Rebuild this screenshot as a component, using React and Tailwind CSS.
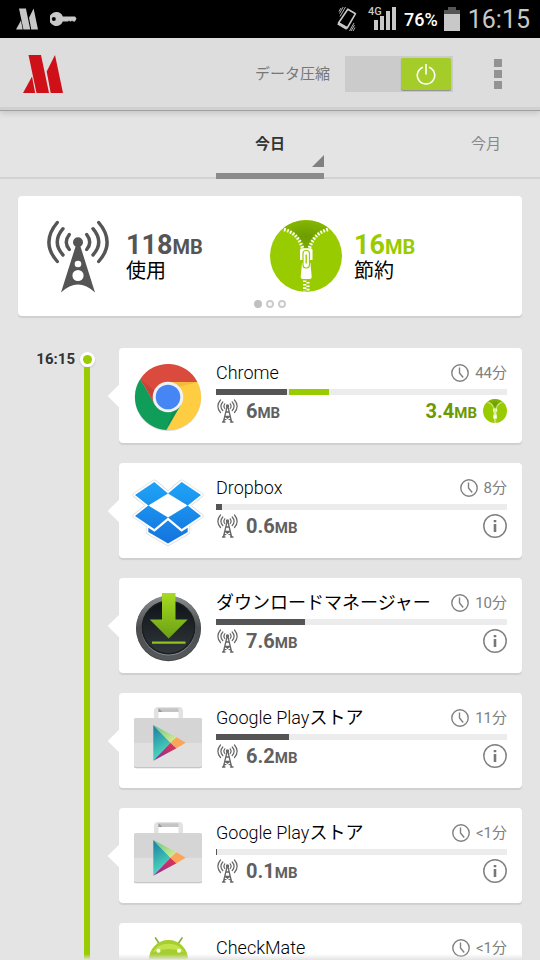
import { useState } from "react";

const apps = [
  { name: "Chrome", icon: ChromeIcon, time: "44分", used: "6", usedPct: 24.4, saved: "3.4", savedPct: 13.8 },
  { name: "Dropbox", icon: DropboxIcon, time: "8分", used: "0.6", usedPct: 2.1 },
  { nameJa: "ダウンロードマネージャー", icon: DownloadIcon, time: "10分", used: "7.6", usedPct: 30.6 },
  { name: "Google Play", nameJa: "ストア", icon: PlayIcon, time: "11分", used: "6.2", usedPct: 25.1 },
  { name: "Google Play", nameJa: "ストア", icon: PlayIcon, time: "<1分", used: "0.1", usedPct: 0.4 },
  { name: "CheckMate", icon: AndroidIcon, time: "<1分", usedPct: 0.4 },
];

function MaxLogo({ className }) {
  return (
    <svg viewBox="0 0 40 38" className={className} fill="currentColor" aria-hidden="true">
      <path d="M5.5 0H18l8 38H13.5zM0 38l9-16.500L12.200 38zM32 0l8 38H27.700l-4-21.500z" />
    </svg>
  );
}

function KeyIcon() {
  return (
    <svg viewBox="0 0 27 14" className="h-3.5 w-[27px]" aria-hidden="true">
      <path
        fill="#c8c8c8"
        fillRule="evenodd"
        d="M6.500 0a7 7 0 0 1 6.300 4.500H25l1.500 2-1.500 3h-2l-1-1-1 1h-1l-1-1-1 1h-5.200A7 7 0 1 1 6.500 0zM3.800 5a2 2 0 1 0 0 4 2 2 0 0 0 0-4z"
      />
    </svg>
  );
}

function VibrateIcon() {
  return (
    <svg viewBox="0 0 22 26" className="h-[26px] w-[22px]" fill="none" stroke="#c8c8c8" aria-hidden="true">
      <path d="M11.800 3.200l7.700 4.500-8.300 14.300-8.700-5z" strokeWidth="1.600" strokeLinejoin="round" />
      <path d="M2 17.300l9 5.200" strokeWidth="3" />
      <path d="M9.500 1L4 10.500M7.200 1L3.500 7.500M5 2L3 5.500M18 17L13.500 25M18.500 19l-3.500 6M19 21.500l-2 3.500" strokeWidth="0.900" />
    </svg>
  );
}

function BigTower() {
  return (
    <svg viewBox="0 0 62 73" className="h-[73px] w-[62px]" aria-hidden="true">
      <g fill="none" stroke="#555" strokeWidth="3.400" strokeLinecap="round">
        <path d="M10.300 2.500Q-6.500 22.300 10.300 41.500M16 8.700Q4.500 22.300 16 35M22.300 14.500Q16.300 22.300 22.300 29.500" />
        <path d="M51.700 2.500Q68.500 22.300 51.700 41.500M46 8.700Q57.500 22.300 46 35M39.700 14.500Q45.700 22.300 39.700 29.500" />
      </g>
      <circle cx="31" cy="22.300" r="5" fill="#555" />
      <path d="M29 25h4L48 72.500Q31 56.500 14 72.500z" fill="#555" />
      <circle cx="31" cy="44" r="3.300" fill="#fff" />
      <circle cx="31" cy="55.500" r="5.600" fill="#fff" />
    </svg>
  );
}

function SmallTower() {
  return (
    <svg viewBox="0 0 22 24" className="h-6 w-[22px] shrink-0" fill="none" stroke="#666" strokeLinecap="round" aria-hidden="true">
      <path
        strokeWidth="1.200"
        d="M4.500 1Q-.8 7.200 4.500 13.500M6.800 3Q3 7.200 6.800 11.500M8.800 4.800Q7 7.200 8.800 9.500M18.500 1Q23.800 7.200 18.500 13.500M16.200 3Q20 7.200 16.200 11.500M14.200 4.800Q16 7.200 14.200 9.500"
      />
      <circle cx="11.500" cy="7" r="1.700" fill="#666" stroke="none" />
      <path strokeWidth="1.300" d="M11 8L7.500 22.500M12 8l3.500 14.500M10 13h3M9 17.500h5M9 17.500l5.500 3.500M14 17.500L8.500 21M6.500 23h2.500M14.500 23H17" />
    </svg>
  );
}

function ZipperIcon({ className, id }) {
  return (
    <svg viewBox="0 0 72 72" className={className} aria-hidden="true">
      <defs>
        <radialGradient id={id} cx="0.5" cy="0.6" r="0.6">
          <stop offset="0" stopColor="#6c9c00" />
          <stop offset="1" stopColor="#84b600" />
        </radialGradient>
      </defs>
      <circle cx="36" cy="36" r="36" fill="#9c0" />
      <path d="M13 8.500A36 36 0 0 1 59 8.500Q43 12 39 28h-6Q29 12 13 8.500z" fill={`url(#${id})`} />
      <g fill="none" stroke="#fff" strokeWidth="3.400" strokeDasharray="1.700 1.500">
        <path d="M14 9.500Q28 13 32.500 28" />
        <path d="M58 9.500Q44 13 39.500 28" />
      </g>
      <path d="M32 28.300h8.500q2 0 2 2V40h-12.500v-9.700q0-2 2-2z" fill="#fff" />
      <path d="M32 43h8.500l1.200 14q0 2-2 2h-7q-2 0-2-2z" fill="#fff" />
      <path d="M31 41.500h10.500" stroke="#9c0" strokeWidth="2" />
      <rect x="33" y="30.500" width="6.500" height="17.500" rx="3" fill="#fff" stroke="#9c0" strokeWidth="1.200" />
      <path d="M36.200 35v8" stroke="#9c0" strokeWidth="1.400" strokeLinecap="round" />
      <path d="M34.700 60.500v11M38 62v10" stroke="#fff" strokeWidth="3.200" strokeDasharray="1.600 1.800" />
    </svg>
  );
}

function ClockIcon() {
  return (
    <svg viewBox="0 0 18 18" className="size-[18px]" fill="none" stroke="#808080" strokeWidth="1.400" aria-hidden="true">
      <circle cx="9" cy="9" r="8.200" />
      <path d="M8.500 3.500V9l3.700 4.500" />
    </svg>
  );
}

function InfoIcon() {
  return (
    <svg viewBox="0 0 24 24" className="size-6" aria-hidden="true">
      <circle cx="12" cy="12" r="11.200" fill="none" stroke="#808080" strokeWidth="1.500" />
      <path d="M10.700 6h2.600v2.300h-2.600zM10.700 10h2.600v8h-2.600z" fill="#777" />
    </svg>
  );
}

function ChromeIcon() {
  return (
    <svg viewBox="0 0 70 70" className="size-[70px]" aria-hidden="true">
      <circle cx="35" cy="35.800" r="33.300" fill="#000" opacity="0.15" />
      <path d="M35 20H64.400A33 33 0 0 1 33.300 68L48 42.500z" fill="#ffcd41" />
      <path d="M48 42.500L33.300 68A33 33 0 0 1 7.300 17L22 42.500z" fill="#109d59" />
      <path d="M22 42.500L7.300 17A33 33 0 0 1 64.400 20H35z" fill="#da4b3e" />
      <path d="M7.300 17L20 39l2-10z" fill="#b03a30" opacity="0.4" />
      <path d="M35 20h29.400L46 25z" fill="#e0a030" opacity="0.4" />
      <path d="M33.300 68L48 42.500 40 48z" fill="#0b6e3e" opacity="0.3" />
      <circle cx="35" cy="35" r="15.300" fill="#f1f1f1" />
      <circle cx="35" cy="35" r="12.300" fill="#4586f4" />
    </svg>
  );
}

function DropboxIcon() {
  const shape =
    "M21.300 5L35 16.500 15.300 28.500 2 18zM48.700 5L68 18 54.700 28.500 35 16.500zM15.300 28.500L35 40.500 21.300 52 2 39zM54.700 28.500L68 39 48.700 52 35 40.500zM35 43.500L48.500 54.700 54.700 50.700V55L35 66.500 15.300 55V50.700L21.500 54.700z";
  return (
    <svg viewBox="0 0 70 70" className="size-[70px] overflow-visible" aria-hidden="true">
      <defs>
        <linearGradient id="dropbox" gradientUnits="userSpaceOnUse" x1="0" y1="4" x2="0" y2="66">
          <stop offset="0" stopColor="#1ea5f7" />
          <stop offset="1" stopColor="#1573de" />
        </linearGradient>
      </defs>
      <path d={shape} fill="#ddd" stroke="#ddd" strokeWidth="5" strokeLinejoin="round" />
      <path d={shape} fill="#fff" stroke="#fff" strokeWidth="3.500" strokeLinejoin="round" />
      <path d="M35 16.500L54.700 28.500 35 40.500 15.300 28.500z" fill="#fff" />
      <path d={shape} fill="url(#dropbox)" />
    </svg>
  );
}

function DownloadIcon() {
  return (
    <svg viewBox="0 0 70 70" className="size-[70px]" aria-hidden="true">
      <defs>
        <linearGradient id="rim" x1="0" y1="0" x2="0" y2="1">
          <stop offset="0" stopColor="#8a8e90" />
          <stop offset="0.5" stopColor="#4a4e50" />
          <stop offset="1" stopColor="#55595b" />
        </linearGradient>
        <linearGradient id="face" x1="0" y1="0" x2="0" y2="1">
          <stop offset="0" stopColor="#0e1418" />
          <stop offset="1" stopColor="#30363a" />
        </linearGradient>
        <linearGradient id="arrow" x1="0" y1="0" x2="0" y2="1">
          <stop offset="0" stopColor="#a6dc20" />
          <stop offset="1" stopColor="#6a9f14" />
        </linearGradient>
      </defs>
      <circle cx="35.500" cy="36.800" r="32.500" fill="#444" />
      <circle cx="35.500" cy="36" r="32.300" fill="url(#rim)" />
      <circle cx="35.500" cy="36.500" r="27" fill="#868a8c" />
      <circle cx="35.500" cy="35.500" r="27" fill="#1a1e20" />
      <circle cx="35.500" cy="35.500" r="25.500" fill="url(#face)" />
      <path d="M29 1h13.500v26.500h12.200L35.700 46.500 16.700 27.500H29z" fill="url(#arrow)" />
      <path d="M19 49.500h33.500v2.200H19z" fill="#8fc41c" />
    </svg>
  );
}

function PlayIcon() {
  return (
    <svg viewBox="0 0 70 70" className="size-[70px]" aria-hidden="true">
      <defs>
        <linearGradient id="playTeal" x1="0" y1="0" x2="0.3" y2="1">
          <stop offset="0" stopColor="#1c7aa0" />
          <stop offset="1" stopColor="#4fe0c0" />
        </linearGradient>
        <linearGradient id="playGreen" x1="0" y1="0" x2="1" y2="1">
          <stop offset="0" stopColor="#5cc48c" />
          <stop offset="1" stopColor="#e2f08c" />
        </linearGradient>
        <linearGradient id="playRed" x1="0" y1="1" x2="1" y2="0">
          <stop offset="0" stopColor="#7b2fa5" />
          <stop offset="1" stopColor="#e8344a" />
        </linearGradient>
      </defs>
      <path d="M21 11V4q0-4 4-4h21q4 0 4 4v7h-4.500V4.800H25.500V11z" fill="#e2e2e2" />
      <path d="M25.500 1.300h20v3.700h-20z" fill="#c4c4c4" />
      <path d="M25.500 1.300v3.700h4z" fill="#999" />
      <rect x="1" y="12" width="68" height="49.300" rx="2" fill="#bdbdbd" />
      <rect x="1" y="11" width="68" height="49.300" rx="2" fill="#e0e0e0" />
      <path d="M3 11h64q2 0 2 2v22.700H1V13q0-2 2-2z" fill="#d5d5d5" />
      <path d="M20.300 18L37.500 35.700 20.300 53.700z" fill="url(#playTeal)" />
      <path d="M20.300 18L43.500 30.300 37.500 35.700z" fill="url(#playGreen)" />
      <path d="M20.300 53.700L43.500 41.300 37.500 35.700z" fill="url(#playRed)" />
      <path d="M43.500 30.300L52.700 35.700 43.500 41.300 37.500 35.700z" fill="#fba45c" />
    </svg>
  );
}

function AndroidIcon() {
  return (
    <svg viewBox="0 0 70 70" className="size-[70px]" aria-hidden="true">
      <path d="M22.500 1l4 6M49 1l-4 6" stroke="#8dab3c" strokeWidth="1.600" strokeLinecap="round" />
      <path d="M16 22.500a19.500 19.500 0 0 1 39 0z" fill="#a5cf2c" />
      <path d="M20 15a17 14 0 0 1 31 0q-15-6-31 0z" fill="#c2e34e" />
      <circle cx="25.500" cy="13.700" r="2" fill="#fff" />
      <circle cx="46" cy="13.700" r="2" fill="#fff" />
      <path d="M16 25h39v30q0 4-4 4H20q-4 0-4-4z" fill="#a5cf2c" />
    </svg>
  );
}

function StatusBar() {
  return (
    <div className="flex h-[38px] shrink-0 items-center bg-black pr-2.5 pl-4 text-[#c8c8c8]">
      <MaxLogo className="h-[22px] w-[22px]" />
      <span className="ml-3">
        <KeyIcon />
      </span>
      <div className="ml-auto flex items-center">
        <VibrateIcon />
        <span className="relative ml-2.5 flex h-[26px] w-7 items-end justify-end gap-0.5 pb-0.5">
          <span className="absolute top-0 left-0 text-[11px] leading-none font-medium">4G</span>
          <i className="h-2.5 w-1 bg-current" />
          <i className="h-3.5 w-1 bg-current" />
          <i className="h-[19px] w-1 bg-current" />
          <i className="h-[23px] w-1 bg-current" />
        </span>
        <span className="ml-2 text-[18px] font-medium text-white">76%</span>
        <span className="ml-1.5 flex w-4 flex-col items-center">
          <i className="h-[3px] w-2 bg-[#555]" />
          <i className="h-1 w-4 bg-[#555]" />
          <i className="h-[17px] w-4 bg-current" />
        </span>
        <span className="ml-2 text-[25px] leading-none">16:15</span>
      </div>
    </div>
  );
}

function Header() {
  const [on, setOn] = useState(true);

  return (
    <header className="flex h-[73px] shrink-0 items-center border-b border-[#a0a0a0] bg-[#ddd] pr-[38px] pl-[23px] shadow-[inset_0_-3px_0_#d0d0d0,0_2px_6px_rgba(0,0,0,0.15)]">
      <MaxLogo className="h-[38px] w-10 text-[#cf1019]" />
      <span id="compress" className="ml-auto text-[15px] text-[#777]">データ圧縮</span>
      <button
        role="switch"
        aria-checked={on}
        aria-labelledby="compress"
        onClick={() => setOn(!on)}
        className={`ml-[15px] flex h-9 w-[108px] items-center bg-[#cbcbcb] px-0.5 ${on ? "justify-end" : "justify-start"}`}
      >
        <span className={`flex h-8 w-[50px] items-center justify-center rounded-xs shadow-[0_1px_1px_rgba(0,0,0,0.3)] ${on ? "bg-[#a4cd29]" : "bg-[#999]"}`}>
          <svg viewBox="0 0 20 22" className="h-[22px] w-5" fill="none" stroke="#fff" strokeWidth="1.600" aria-hidden="true">
            <path d="M10 1v10.500M7 4.200a8.700 8.700 0 1 0 6 0" />
          </svg>
        </span>
      </button>
      <button aria-label="メニュー" className="ml-[41px] flex w-2 flex-col items-center gap-[3px] py-2">
        <i className="size-2 bg-[#939393]" />
        <i className="size-2 bg-[#939393]" />
        <i className="size-2 bg-[#939393]" />
      </button>
    </header>
  );
}

function Tabs() {
  return (
    <nav className="grid h-[68px] shrink-0 grid-cols-5 border-b-2 border-[#d2d2d2] text-[15px]">
      <button className="relative col-start-3 -mb-0.5 border-b-6 border-[#8b8b8b] pt-1 font-bold text-[#333]">
        今日
        <svg viewBox="0 0 12 12" className="absolute right-0 bottom-1.5 size-3" aria-hidden="true">
          <path d="M12 0v12H0z" fill="#808080" />
        </svg>
      </button>
      <button className="col-start-5 text-[#888]">今月</button>
    </nav>
  );
}

function Amount({ value, big }) {
  return (
    <span className={big ? "text-[27px] leading-6 font-bold" : "text-[20px] leading-6 font-bold"}>
      {value}
      <span className={big ? "text-[20px]" : "text-[15px]"}>MB</span>
    </span>
  );
}

function Summary() {
  return (
    <section className="relative mx-[18px] mt-[17px] grid h-[120px] shrink-0 grid-cols-2 rounded-sm bg-white shadow-[0_2px_1px_#cfcfcf]">
      <div className="flex items-center gap-[17px] pl-[29px]">
        <BigTower />
        <div className="flex flex-col pt-1 text-[#555]">
          <Amount value="118" big />
          <span className="text-[20px] leading-6 text-black">使用</span>
        </div>
      </div>
      <div className="flex items-center gap-3">
        <ZipperIcon id="zipBig" className="size-[72px]" />
        <div className="flex flex-col pt-1 text-[#9c0]">
          <Amount value="16" big />
          <span className="text-[20px] leading-6 text-black">節約</span>
        </div>
      </div>
      <div className="absolute inset-x-0 bottom-2 flex justify-center gap-1">
        <i className="size-2 rounded-full bg-[#c0c0c0]" />
        <i className="size-2 rounded-full border-2 border-[#ccc]" />
        <i className="size-2 rounded-full border-2 border-[#ccc]" />
      </div>
    </section>
  );
}

function AppCard({ app }) {
  const Icon = app.icon;

  return (
    <li className="relative flex h-[95px] shrink-0 gap-[13px] rounded-sm bg-white pr-[15px] pl-3.5 shadow-[0_2px_1px_#cfcfcf]">
      <span className="absolute top-10 -left-2 size-4 rotate-45 bg-white" />
      <div className="relative shrink-0 pt-3.5">
        <Icon />
      </div>
      <div className="min-w-0 flex-1 pt-3">
        <div className="flex h-[26px] items-center justify-between">
          <h2 className="truncate text-[18px] leading-[26px] font-light text-black">
            {app.name}
            {app.nameJa && <span className="font-normal">{app.nameJa}</span>}
          </h2>
          <span className="flex items-center gap-1.5 text-[15px] text-[#808080]">
            <ClockIcon />
            {app.time}
          </span>
        </div>
        <div className="mt-[3px] flex h-1.5 gap-0.5 bg-[#ececec]">
          <i className="bg-[#555]" style={{ width: `${app.usedPct}%` }} />
          {app.saved && <i className="bg-[#9c0]" style={{ width: `${app.savedPct}%` }} />}
        </div>
        {app.used && (
          <div className="mt-1 flex h-6 items-center text-[#606060]">
            <SmallTower />
            <span className="ml-2 pt-0.5">
              <Amount value={app.used} />
            </span>
            {app.saved ? (
              <span className="ml-auto flex items-center gap-1.5 text-[#6a9a00]">
                <span className="pt-0.5">
                  <Amount value={app.saved} />
                </span>
                <ZipperIcon id="zipSmall" className="size-6" />
              </span>
            ) : (
              <button aria-label="情報" className="ml-auto">
                <InfoIcon />
              </button>
            )}
          </div>
        )}
      </div>
    </li>
  );
}

export default function App() {
  return (
    <div className="relative flex h-screen flex-col overflow-hidden bg-[#e4e4e4] font-[Roboto,'Noto_Sans_CJK_JP',sans-serif]">
      <StatusBar />
      <Header />
      <Tabs />
      <Summary />
      <main className="mt-8 flex min-h-0 flex-1 pr-[18px]">
        <time className="w-[75px] shrink-0 text-right text-[15px] leading-[22px] font-bold text-[#333]">16:15</time>
        <div className="mt-1 mr-5 flex w-6 shrink-0 flex-col items-center">
          <span className="flex size-[15px] shrink-0 items-center justify-center rounded-full bg-white shadow-sm">
            <i className="size-[9px] rounded-full bg-[#9c0]" />
          </span>
          <i className="w-1.5 flex-1 bg-[#9c0]" />
        </div>
        <ul className="flex flex-1 flex-col gap-5">
          {apps.map((app, i) => (
            <AppCard key={i} app={app} />
          ))}
        </ul>
      </main>
      {/* Desvanecido del borde inferior */}
      <div className="pointer-events-none absolute inset-x-0 bottom-0 h-1.5 bg-linear-to-b from-transparent to-[#e4e4e4]" />
    </div>
  );
}
